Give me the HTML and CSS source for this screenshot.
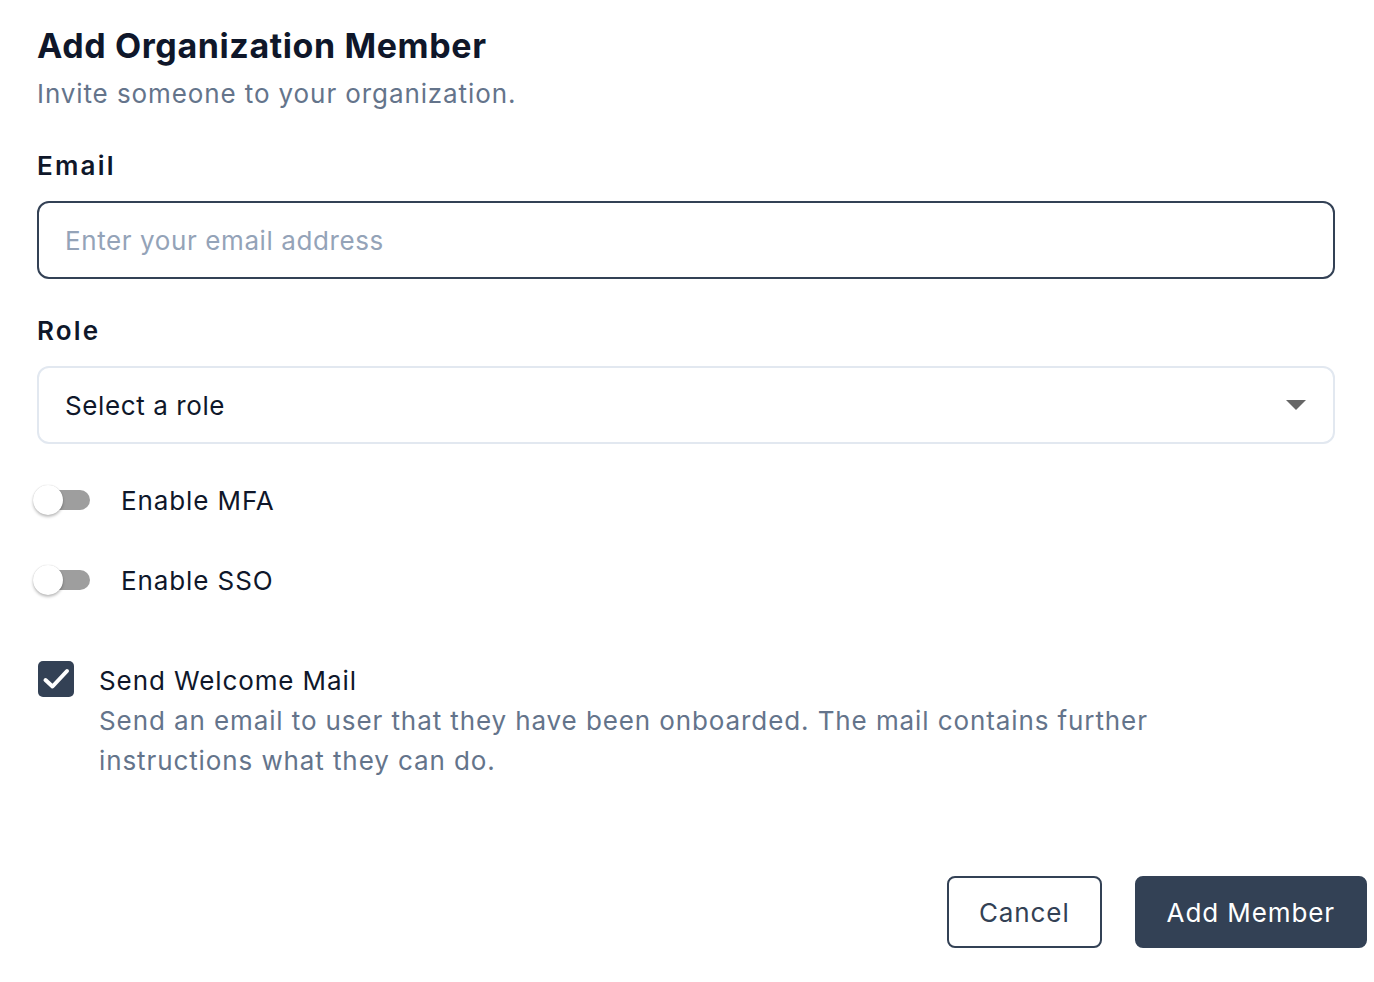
FILE: index.html
```html
<!DOCTYPE html>
<html lang="en">
<head>
<meta charset="utf-8">
<title>Add Organization Member</title>
<link rel="stylesheet" href="styles.css">
</head>
<body>
<div class="dialog">
  <header class="head">
    <h1 class="title">Add Organization Member</h1>
    <p class="subtitle">Invite someone to your organization.</p>
  </header>

  <form class="form">
    <div class="field">
      <label class="label" for="email">Email</label>
      <input class="input" id="email" type="email" placeholder="Enter your email address">
    </div>

    <div class="field">
      <label class="label" for="role">Role</label>
      <div class="select" id="role">
        <span class="select-value">Select a role</span>
        <svg class="caret" width="20" height="10" viewBox="0 0 20 10"><path d="M0 0h20L10 10z" fill="#666"/></svg>
      </div>
    </div>

    <div class="toggles">
      <label class="toggle">
        <span class="switch"><span class="track"></span><span class="thumb"></span></span>
        <span class="toggle-text">Enable MFA</span>
      </label>
      <label class="toggle">
        <span class="switch"><span class="track"></span><span class="thumb"></span></span>
        <span class="toggle-text">Enable SSO</span>
      </label>
    </div>

    <div class="check">
      <span class="box">
        <svg width="36" height="36" viewBox="0 0 36 36"><path d="M7.5 19l7 6.5L29 10" fill="none" stroke="#fff" stroke-width="4" stroke-linecap="round" stroke-linejoin="round"/></svg>
      </span>
      <div class="check-body">
        <div class="check-title">Send Welcome Mail</div>
        <div class="check-desc">Send an email to user that they have been onboarded. The mail contains further instructions what they can do.</div>
      </div>
    </div>

    <div class="actions">
      <button type="button" class="btn btn-outline">Cancel</button>
      <button type="button" class="btn btn-solid">Add Member</button>
    </div>
  </form>
</div>
</body>
</html>
```

FILE: styles.css
```css
* { box-sizing: border-box; }

html, body {
  margin: 0;
  background: #fff;
}

body {
  font-family: Inter, "Noto Sans", "Liberation Sans", sans-serif;
  color: #0f172a;
  letter-spacing: 0.9px;
}

.dialog {
  width: 1374px;
  padding: 24px 7px 0 37px;
}

.head { margin-bottom: 38px; }

.title {
  margin: 0;
  font-size: 34px;
  font-weight: 700;
  line-height: 44px;
  letter-spacing: 0.6px;
  color: #0f172a;
}

.subtitle {
  margin: 8px 0 0;
  font-size: 26px;
  line-height: 36px;
  color: #64748b;
}

.form {
  display: flex;
  flex-direction: column;
}

.field {
  display: flex;
  flex-direction: column;
  width: 1298px;
  margin-bottom: 36px;
}

.label {
  font-size: 26px;
  font-weight: 600;
  letter-spacing: 2.2px;
  line-height: 32px;
  margin-bottom: 19px;
  color: #0f172a;
}

.input {
  height: 78px;
  border: 2px solid #334155;
  border-radius: 12px;
  padding: 0 26px;
  font: inherit;
  font-size: 26px;
  letter-spacing: 0.6px;
  color: #0f172a;
  outline: none;
}

.input::placeholder { color: #94a3b8; }

.select {
  height: 78px;
  border: 2px solid #e2e8f0;
  border-radius: 12px;
  padding: 0 27px 0 26px;
  display: flex;
  align-items: center;
  justify-content: space-between;
  font-size: 26px;
  letter-spacing: 0.6px;
  color: #0f172a;
}

.toggles {
  display: flex;
  flex-direction: column;
  gap: 40px;
}

.toggle {
  display: flex;
  align-items: center;
  gap: 30px;
  height: 40px;
}

.switch {
  position: relative;
  width: 58px;
  height: 30px;
  margin-left: -4px;
  flex: none;
}

.track {
  position: absolute;
  left: 4px;
  right: 1px;
  top: 5px;
  height: 20px;
  border-radius: 10px;
  background: #9e9e9e;
}

.thumb {
  position: absolute;
  left: 0;
  top: 0;
  width: 30px;
  height: 30px;
  border-radius: 50%;
  background: #fff;
  box-shadow: 0 2px 3px rgba(0,0,0,0.25), 0 0 1px rgba(0,0,0,0.2);
}

.toggle-text {
  font-size: 26px;
  color: #0f172a;
}

.check {
  display: flex;
  gap: 25px;
  margin-top: 61px;
  margin-left: 1px;
}

.box {
  width: 36px;
  height: 36px;
  border-radius: 5px;
  background: #334155;
  display: flex;
  align-items: center;
  justify-content: center;
  flex: none;
}

.check-body { max-width: 1100px; }

.check-title {
  font-size: 26px;
  line-height: 40px;
  color: #0f172a;
}

.check-desc {
  font-size: 26px;
  line-height: 40px;
  color: #64748b;
}

.actions {
  display: flex;
  justify-content: flex-end;
  gap: 33px;
  margin-top: 95px;
}

.btn {
  height: 72px;
  border-radius: 8px;
  font: inherit;
  font-size: 26px;
  letter-spacing: 0.9px;
  padding: 0 30px;
  cursor: pointer;
}

.btn-outline {
  background: #fff;
  border: 2px solid #334155;
  color: #334155;
}

.btn-solid {
  background: #334155;
  border: 2px solid #334155;
  color: #fff;
}
```
